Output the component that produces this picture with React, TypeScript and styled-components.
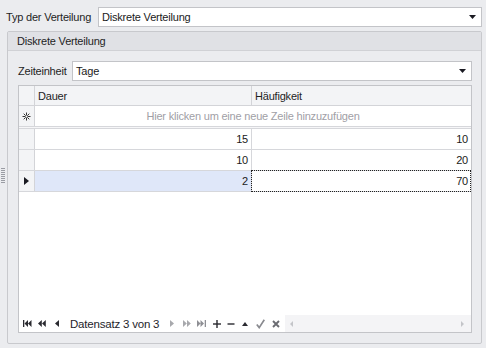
import React from "react";
import styled, { createGlobalStyle } from "styled-components";

const Global = createGlobalStyle`
  html, body { margin: 0; padding: 0; background: #ebecef; }
  body {
    font-family: "Liberation Sans", Arial, sans-serif;
    font-size: 11px;
    letter-spacing: -0.2px;
    color: #1e1e1e;
  }
  * { box-sizing: border-box; }
`;

const Screen = styled.div`
  width: 486px;
  height: 348px;
  display: flex;
  flex-direction: row;
  background: #ebecef;
  overflow: hidden;
`;

const Grip = styled.div`
  width: 6px;
  flex: none;
  align-self: center;
  height: 16px;
  margin-top: 4px;
  display: flex;
  justify-content: flex-start;
  padding-left: 1px;
  &::before {
    content: "";
    display: block;
    width: 4px;
    height: 16px;
    background: repeating-linear-gradient(
      to bottom,
      #9a9ca3 0 1px,
      transparent 1px 2px
    );
  }
`;

const Main = styled.div`
  flex: 1;
  display: flex;
  flex-direction: column;
  padding: 7px 4px 0 0;
`;

const FieldRow = styled.div`
  display: flex;
  align-items: center;
  height: 20px;
  flex: none;
`;

const Label = styled.div<{ $w: number }>`
  width: ${(p) => p.$w}px;
  flex: none;
  white-space: nowrap;
  color: #1e1e1e;
`;

const Combo = styled.div`
  flex: 1;
  height: 20px;
  background: #ffffff;
  border: 1px solid #c3c4c8;
  display: flex;
  align-items: center;
  padding: 0 5px 0 3px;
  justify-content: space-between;
  color: #1a1a1a;
`;

const Group = styled.div`
  margin: 4px 0 0 1px;
  height: 313px;
  border: 1px solid #c8c9cd;
  border-radius: 2px;
  display: flex;
  flex-direction: column;
  overflow: hidden;
`;

const GroupHeader = styled.div`
  height: 19px;
  flex: none;
  background: #e0e1e5;
  border-bottom: 1px solid #d0d1d5;
  padding-left: 9px;
  display: flex;
  align-items: center;
  color: #1e1e1e;
`;

const GroupBody = styled.div`
  flex: 1;
  display: flex;
  flex-direction: column;
  gap: 4px;
  padding: 10px 9px 10px 10px;
`;

const Grid = styled.div`
  flex: 1;
  border: 1px solid #c3c4c8;
  background: #ffffff;
  display: flex;
  flex-direction: column;
`;

const Row = styled.div<{ $h: number; $line?: string }>`
  display: flex;
  flex: none;
  height: ${(p) => p.$h}px;
  border-bottom: 1px solid ${(p) => p.$line ?? "#d6d7db"};
`;

const Indicator = styled.div`
  width: 16px;
  flex: none;
  background: #f3f4f6;
  border-right: 1px solid #d3d4d8;
  display: flex;
  align-items: center;
  justify-content: center;
`;

const HeaderCell = styled.div<{ $w: number; $last?: boolean }>`
  width: ${(p) => p.$w}px;
  flex: none;
  background: #f3f4f6;
  border-right: ${(p) => (p.$last ? "none" : "1px solid #d3d4d8")};
  display: flex;
  align-items: center;
  padding-left: 3px;
  color: #1e1e1e;
`;

const NewRowText = styled.div`
  flex: 1;
  display: flex;
  align-items: center;
  justify-content: center;
  color: #9fa0a6;
`;

const Spacer = styled.div`
  height: 2px;
  flex: none;
  background: #f6f6f8;
  border-bottom: 1px solid #d6d7db;
`;

const Cell = styled.div<{ $w: number; $last?: boolean; $sel?: boolean; $focus?: boolean }>`
  width: ${(p) => p.$w}px;
  flex: none;
  background: ${(p) => (p.$sel ? "#dfe7f9" : "#ffffff")};
  border-right: ${(p) => (p.$last ? "none" : "1px solid #d6d7db")};
  display: flex;
  align-items: center;
  justify-content: flex-end;
  padding-right: 3px;
  color: #1a1a1a;
  position: relative;
  ${(p) =>
    p.$focus
      ? `&::after { content: ""; position: absolute; left: -1px; top: -1px; right: 0; bottom: -1px; border: 1px dotted #222; }`
      : ""}
`;

const Empty = styled.div`
  flex: 1;
  background: #ffffff;
`;

const Navigator = styled.div`
  height: 17px;
  flex: none;
  display: flex;
  align-items: stretch;
  background: #ffffff;
`;

const NavButton = styled.div<{ $w: number }>`
  width: ${(p) => p.$w}px;
  flex: none;
  display: flex;
  align-items: center;
  justify-content: center;
`;

const NavText = styled.div`
  width: 99px;
  flex: none;
  padding-left: 5px;
  display: flex;
  align-items: center;
  color: #1e1e2a;
  font-size: 11.5px;
  white-space: nowrap;
`;

const HScroll = styled.div`
  flex: 1;
  margin-left: 2px;
  background: #f4f4f6;
  display: flex;
  align-items: center;
  justify-content: space-between;
  padding: 0 7px 0 5px;
`;

const ComboArrow = () => (
  <svg width="7" height="4" viewBox="0 0 7 4">
    <path d="M0 0H7L3.5 4Z" fill="#1a1a22" />
  </svg>
);

const Star = () => (
  <svg width="9" height="9" viewBox="0 0 9 9">
    <g stroke="#333" strokeWidth="1">
      <line x1="4.5" y1="0.5" x2="4.5" y2="8.5" />
      <line x1="0.5" y1="4.5" x2="8.5" y2="4.5" />
      <line x1="1.7" y1="1.7" x2="7.3" y2="7.3" />
      <line x1="7.3" y1="1.7" x2="1.7" y2="7.3" />
    </g>
    <rect x="3.5" y="3.5" width="2" height="2" fill="#fff" />
  </svg>
);

const RowArrow = () => (
  <svg width="5" height="8" viewBox="0 0 5 8">
    <path d="M0 0L5 4L0 8Z" fill="#1a1a22" />
  </svg>
);

const C_DARK = "#2a2a30";
const C_DIS = "#a8a9ad";

const First = () => (
  <svg width="9" height="7" viewBox="0 0 9 7">
    <rect x="0" y="0" width="1.3" height="7" fill={C_DARK} />
    <path d="M1.5 3.5L5 0V7Z M5 3.5L8.5 0V7Z" fill={C_DARK} />
  </svg>
);
const PrevPage = () => (
  <svg width="8" height="7" viewBox="0 0 8 7">
    <path d="M0 3.5L3.8 0V7Z M4 3.5L7.8 0V7Z" fill={C_DARK} />
  </svg>
);
const Prev = () => (
  <svg width="4" height="7" viewBox="0 0 4 7">
    <path d="M0 3.5L4 0V7Z" fill={C_DARK} />
  </svg>
);
const Next = () => (
  <svg width="4" height="7" viewBox="0 0 4 7">
    <path d="M4 3.5L0 0V7Z" fill={C_DIS} />
  </svg>
);
const NextPage = () => (
  <svg width="8" height="7" viewBox="0 0 8 7">
    <path d="M3.8 3.5L0 0V7Z M7.8 3.5L4 0V7Z" fill={C_DIS} />
  </svg>
);
const Last = () => (
  <svg width="10" height="7" viewBox="0 0 10 7">
    <path d="M3.5 3.5L0 0V7Z M7 3.5L3.5 0V7Z" fill="#8e8f94" />
    <rect x="7.7" y="0" width="1.3" height="7" fill="#8e8f94" />
  </svg>
);
const Plus = () => (
  <svg width="8" height="8" viewBox="0 0 8 8">
    <rect x="0" y="3.3" width="8" height="1.4" fill={C_DARK} />
    <rect x="3.3" y="0" width="1.4" height="8" fill={C_DARK} />
  </svg>
);
const Minus = () => (
  <svg width="8" height="8" viewBox="0 0 8 8">
    <rect x="0.5" y="3.3" width="7" height="1.4" fill={C_DARK} />
  </svg>
);
const Up = () => (
  <svg width="6" height="4" viewBox="0 0 6 4">
    <path d="M0 4L3 0L6 4Z" fill={C_DARK} />
  </svg>
);
const Check = () => (
  <svg width="9" height="10" viewBox="0 0 9 10">
    <path d="M0.8 5.5L3.2 8.6L8.3 0.8" stroke="#8a8b90" strokeWidth="1.7" fill="none" />
  </svg>
);
const Cancel = () => (
  <svg width="8" height="8" viewBox="0 0 8 8">
    <path d="M1 1L7 7M7 1L1 7" stroke="#6b6c72" strokeWidth="1.9" />
  </svg>
);
const ScrollLeft = () => (
  <svg width="3" height="6" viewBox="0 0 3 6">
    <path d="M0 3L3 0V6Z" fill="#c4c5c9" />
  </svg>
);
const ScrollRight = () => (
  <svg width="3" height="6" viewBox="0 0 3 6">
    <path d="M3 3L0 0V6Z" fill="#c4c5c9" />
  </svg>
);

const data = [
  { dauer: 15, haeufigkeit: 10 },
  { dauer: 10, haeufigkeit: 20 },
  { dauer: 2, haeufigkeit: 70 },
];

export default function App() {
  const selected = 2;
  return (
    <>
      <Global />
      <Screen>
        <Grip />
        <Main>
          <FieldRow>
            <Label $w={92}>Typ der Verteilung</Label>
            <Combo>
              <span>Diskrete Verteilung</span>
              <ComboArrow />
            </Combo>
          </FieldRow>
          <Group>
            <GroupHeader>Diskrete Verteilung</GroupHeader>
            <GroupBody>
              <FieldRow>
                <Label $w={54}>Zeiteinheit</Label>
                <Combo>
                  <span>Tage</span>
                  <ComboArrow />
                </Combo>
              </FieldRow>
              <Grid>
                <Row $h={20} $line="#d3d4d8">
                  <Indicator />
                  <HeaderCell $w={217}>Dauer</HeaderCell>
                  <HeaderCell $w={219} $last>
                    Häufigkeit
                  </HeaderCell>
                </Row>
                <Row $h={21}>
                  <Indicator>
                    <Star />
                  </Indicator>
                  <NewRowText>Hier klicken um eine neue Zeile hinzuzufügen</NewRowText>
                </Row>
                <Spacer />
                {data.map((d, i) => (
                  <Row $h={21} key={i}>
                    <Indicator>{i === selected ? <RowArrow /> : null}</Indicator>
                    <Cell $w={217} $sel={i === selected}>
                      {d.dauer}
                    </Cell>
                    <Cell $w={219} $last $focus={i === selected}>
                      {d.haeufigkeit}
                    </Cell>
                  </Row>
                ))}
                <Empty />
                <Navigator>
                  <NavButton $w={17}>
                    <First />
                  </NavButton>
                  <NavButton $w={12}>
                    <PrevPage />
                  </NavButton>
                  <NavButton $w={17}>
                    <Prev />
                  </NavButton>
                  <NavText>Datensatz 3 von 3</NavText>
                  <NavButton $w={15}>
                    <Next />
                  </NavButton>
                  <NavButton $w={15}>
                    <NextPage />
                  </NavButton>
                  <NavButton $w={16}>
                    <Last />
                  </NavButton>
                  <NavButton $w={13}>
                    <Plus />
                  </NavButton>
                  <NavButton $w={16}>
                    <Minus />
                  </NavButton>
                  <NavButton $w={12}>
                    <Up />
                  </NavButton>
                  <NavButton $w={18}>
                    <Check />
                  </NavButton>
                  <NavButton $w={14}>
                    <Cancel />
                  </NavButton>
                  <HScroll>
                    <ScrollLeft />
                    <ScrollRight />
                  </HScroll>
                </Navigator>
              </Grid>
            </GroupBody>
          </Group>
        </Main>
      </Screen>
    </>
  );
}
